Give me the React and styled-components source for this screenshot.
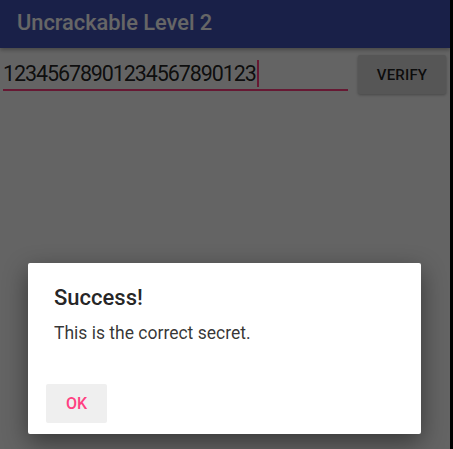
import React from "react";
import styled, { createGlobalStyle } from "styled-components";

const Global = createGlobalStyle`
  html, body {
    margin: 0;
    padding: 0;
    background: #000;
  }
  body {
    font-family: Roboto, "Liberation Sans", sans-serif;
  }
`;

const Device = styled.div`
  display: flex;
  width: 453px;
  height: 449px;
  overflow: hidden;
  background: #000;
`;

const Screen = styled.div`
  position: relative;
  width: 450px;
  height: 449px;
  display: flex;
  flex-direction: column;
  background: #fafafa;
`;

const Toolbar = styled.header`
  height: 48px;
  display: flex;
  align-items: center;
  padding: 0 17px;
  background: #3f51b5;
  box-shadow: 0 2px 4px rgba(0, 0, 0, 0.3);
  z-index: 1;
`;

const Title = styled.h1`
  margin: 0 0 3px 0;
  font-size: 21.8px;
  font-weight: 500;
  color: #fff;
`;

const Row = styled.div`
  display: flex;
  align-items: flex-start;
  padding: 7px 4px 0 3px;
  gap: 10px;
`;

// text field: digits sit a little above the accent underline
const Field = styled.div`
  flex: 1;
  display: flex;
  align-items: flex-end;
  height: 30px;
  padding-bottom: 4px;
  border-bottom: 2px solid #ff4081;
  font-size: 21.5px;
  line-height: 22px;
  color: rgba(0, 0, 0, 0.87);
  letter-spacing: -1.1px;
`;

const Caret = styled.span`
  display: inline-block;
  width: 2px;
  height: 27px;
  margin: 0 0 -2px 1px;
  background: #ff4081;
`;

const Button = styled.button`
  width: 88px;
  height: 39px;
  border: none;
  border-radius: 2px;
  background: #d6d7d7;
  box-shadow: 0 1px 3px rgba(0, 0, 0, 0.3);
  font-family: inherit;
  font-size: 15px;
  font-weight: 500;
  color: rgba(0, 0, 0, 0.87);
  letter-spacing: 0.2px;
`;

const Scrim = styled.div`
  position: absolute;
  inset: 0;
  background: rgba(0, 0, 0, 0.6);
  display: flex;
  justify-content: center;
  align-items: flex-end;
  padding: 0 1px 15px 0;
  z-index: 2;
`;

const Dialog = styled.div`
  width: 393px;
  height: 171px;
  box-sizing: border-box;
  background: #fff;
  border-radius: 2px;
  box-shadow: 0 8px 24px rgba(0, 0, 0, 0.45);
  padding: 22px 18px 11px 18px;
  display: flex;
  flex-direction: column;
`;

const DialogTitle = styled.h2`
  margin: 0 0 0 8px;
  font-size: 22px;
  font-weight: 500;
  color: rgba(0, 0, 0, 0.87);
`;

const Message = styled.p`
  margin: 13px 0 0 8px;
  font-size: 17.5px;
  color: rgba(0, 0, 0, 0.8);
`;

const Actions = styled.div`
  margin-top: auto;
  display: flex;
`;

const TextButton = styled.button`
  width: 61px;
  height: 39px;
  border: none;
  border-radius: 2px;
  background: #efefef;
  font-family: inherit;
  font-size: 16px;
  font-weight: 500;
  color: #ff4081;
`;

export default function App() {
  return (
    <>
      <Global />
      <Device>
        <Screen>
          <Toolbar>
            <Title>Uncrackable Level 2</Title>
          </Toolbar>
          <Row>
            <Field>
              12345678901234567890123
              <Caret />
            </Field>
            <Button>VERIFY</Button>
          </Row>
          <Scrim>
            <Dialog>
              <DialogTitle>Success!</DialogTitle>
              <Message>This is the correct secret.</Message>
              <Actions>
                <TextButton>OK</TextButton>
              </Actions>
            </Dialog>
          </Scrim>
        </Screen>
      </Device>
    </>
  );
}
